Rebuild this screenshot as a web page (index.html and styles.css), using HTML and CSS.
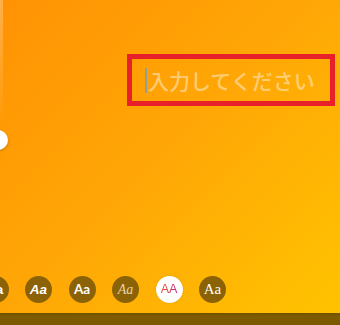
FILE: index.html
```html
<!DOCTYPE html>
<html lang="ja">
<head>
<meta charset="utf-8">
<link rel="stylesheet" href="styles.css">
</head>
<body>
<div class="screen">
  <div class="canvas">
    <div class="slider-track"></div>
    <div class="slider-knob"></div>
    <div class="textbox">
      <span class="caret"></span>
      <span class="placeholder">入力してください</span>
    </div>
  </div>
  <div class="fonts">
    <div class="font f1">Aa</div>
    <div class="font f2">Aa</div>
    <div class="font f3">Aa</div>
    <div class="font f4">Aa</div>
    <div class="font f5"><span>AA</span></div>
    <div class="font f6">Aa</div>
  </div>
  <div class="bar"></div>
</div>
</body>
</html>
```
FILE: styles.css
```css
html, body {
  margin: 0;
  padding: 0;
}
.screen {
  width: 340px;
  height: 325px;
  overflow: hidden;
  display: flex;
  flex-direction: column;
  background: linear-gradient(135deg, #ff9204 0%, #ffa806 50%, #ffc400 100%);
  font-family: "Noto Sans CJK JP", "Noto Sans", sans-serif;
}
.canvas {
  flex: 1;
  position: relative;
  display: flex;
  align-items: flex-start;
}
.slider-track {
  position: absolute;
  left: 0;
  top: 0;
  width: 3px;
  height: 125px;
  background: linear-gradient(rgba(255,255,255,0.28), rgba(255,255,255,0));
}
.slider-knob {
  position: absolute;
  left: -12px;
  top: 130px;
  width: 20px;
  height: 20px;
  border-radius: 50%;
  background: #fff;
  box-shadow: 0 1px 3px rgba(0,0,0,0.25);
}
.textbox {
  margin-top: 54px;
  margin-left: 127px;
  width: 185px;
  height: 42px;
  border: 5px solid #e8202a;
  display: flex;
  align-items: center;
  padding-left: 13px;
  box-sizing: content-box;
}
.caret {
  width: 2px;
  height: 25px;
  background: #8ea294;
  margin-right: 1px;
}
.placeholder {
  font-size: 21px;
  line-height: 25px;
  font-weight: 500;
  color: rgba(255,255,255,0.45);
  white-space: nowrap;
}
.fonts {
  display: flex;
  gap: 16.5px;
  margin-left: -18.5px;
  margin-bottom: 10px;
}
.font {
  flex: none;
  width: 27px;
  height: 27px;
  border-radius: 50%;
  background: #8b6206;
  color: #fff;
  display: flex;
  align-items: center;
  justify-content: center;
  font-size: 13px;
  line-height: 1;
}
.f1 {
  font-family: "Liberation Sans", sans-serif;
  font-weight: bold;
}
.f2 {
  font-family: "Liberation Sans", sans-serif;
  font-weight: 900;
  font-style: italic;
  font-size: 13.5px;
}
.f3 {
  font-family: "Lato", sans-serif;
  font-weight: bold;
  font-size: 13.5px;
}
.f4 {
  font-family: "Liberation Serif", serif;
  font-style: italic;
  color: #e6d3a4;
  font-size: 14px;
}
.f5 {
  background: #fff;
  box-shadow: 0 0 2px rgba(0,0,0,0.15);
}
.f5 span {
  font-family: "Liberation Sans", sans-serif;
  font-size: 12.5px;
  background: linear-gradient(90deg, #e8552f, #c2246f);
  -webkit-background-clip: text;
  background-clip: text;
  color: transparent;
}
.f6 {
  font-family: "Liberation Serif", serif;
  font-size: 15px;
}
.bar {
  height: 12px;
  flex: none;
  background: linear-gradient(#6e5000, #7e5b00 3px, #7b5900);
}
```
